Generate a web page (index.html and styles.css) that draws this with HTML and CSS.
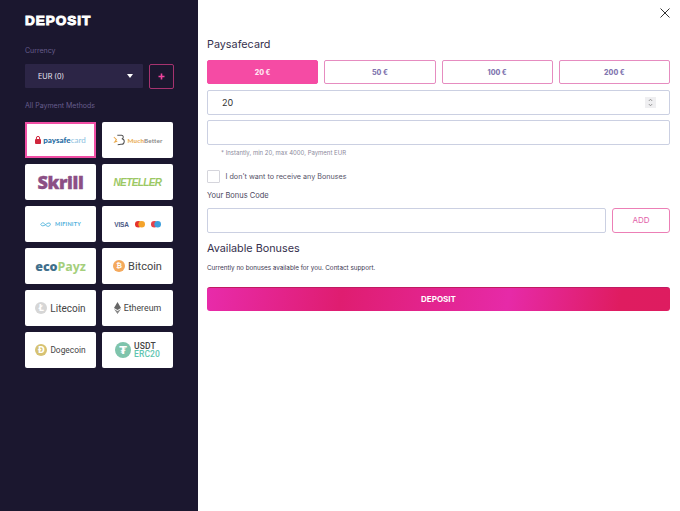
FILE: index.html
```html
<!DOCTYPE html>
<html lang="en">
<head>
<meta charset="utf-8">
<title>Deposit</title>
<link rel="stylesheet" href="styles.css">
</head>
<body>
<div class="modal">
  <aside class="side">
    <h1 class="side-title">DEPOSIT</h1>
    <div class="side-label cur-label">Currency</div>
    <div class="cur-row">
      <div class="cur-select"><span>EUR (0)</span><i class="caret"></i></div>
      <div class="cur-add"><svg width="7" height="7" viewBox="0 0 7 7"><path d="M3.5 0.5v6M0.5 3.5h6" stroke="#f0459f" stroke-width="1.6"/></svg></div>
    </div>
    <div class="side-label pay-label">All Payment Methods</div>
    <div class="methods">
      <div class="card active">
        <svg class="ic" width="6" height="8" viewBox="0 0 6 8"><path d="M1.4 3V2a1.6 1.6 0 0 1 3.2 0v1" fill="none" stroke="#d0263c"/><rect y="3" width="6" height="5" rx="1" fill="#d0263c"/></svg>
        <span class="l-ps"><b>paysafe</b><span>card</span></span>
      </div>
      <div class="card">
        <svg width="12" height="12" viewBox="0 0 14 13"><path d="M1 3l3 3-2 3 3-1" fill="none" stroke="#eba94a" stroke-width="1.2"/><path d="M5 1h4.500a2 2 0 0 1 .8 4 2.500 2.500 0 0 1-1 6.500L5.500 12" fill="none" stroke="#555" stroke-width="1.200"/></svg>
        <span class="l-mb"><b>Much</b><span>Better</span></span>
      </div>
      <div class="card"><span class="l-skrill">Skrill</span></div>
      <div class="card"><span class="l-net">NETELLER</span></div>
      <div class="card">
        <svg width="12" height="5" viewBox="0 0 16 6"><path d="M1 3c1.500-3 3.500-3 6 0s4.500 3 6 1.500 1-3.500-1-3.500-3 1-5 2.500-5 2-6-.5z" fill="none" stroke="#4fb3dc" stroke-width="1.200"/></svg>
        <span class="l-mif">MIFINITY</span>
      </div>
      <div class="card cards-logos">
        <span class="l-visa">VISA</span>
        <svg width="10" height="7" viewBox="0 0 10 7"><circle cx="3.300" cy="3.300" r="3.300" fill="#e5322c"/><circle cx="6.700" cy="3.300" r="3.300" fill="#f4a32a"/></svg>
        <svg width="10" height="7" viewBox="0 0 10 7"><circle cx="3.300" cy="3.300" r="3.300" fill="#e5424a"/><circle cx="6.700" cy="3.300" r="3.300" fill="#3d9fdc"/></svg>
      </div>
      <div class="card"><span class="l-eco"><b>eco</b><span>Payz</span></span></div>
      <div class="card crypto">
        <span class="coin coin-btc">₿</span><span class="c-name c-lg">Bitcoin</span>
      </div>
      <div class="card crypto">
        <span class="coin coin-ltc">Ł</span><span class="c-name c-ltc">Litecoin</span>
      </div>
      <div class="card crypto">
        <svg width="7" height="12" viewBox="0 0 7 12"><path d="M3.500 0L0 6l3.500 2L7 6z" fill="#666"/><path d="M0 7l3.500 5L7 7 3.500 9z" fill="#888"/></svg>
        <span class="c-name c-md">Ethereum</span>
      </div>
      <div class="card crypto">
        <span class="coin coin-doge">Ð</span><span class="c-name c-sm">Dogecoin</span>
      </div>
      <div class="card crypto">
        <span class="coin coin-usdt">₮</span>
        <span class="usdt"><span>USDT</span><span class="erc">ERC20</span></span>
      </div>
    </div>
  </aside>
  <main class="main">
    <svg class="close" width="10" height="10" viewBox="0 0 10 10"><path d="M.5.5l9 9M9.500.5l-9 9" stroke="#333" stroke-width="1" fill="none"/></svg>
    <h2 class="pay-title">Paysafecard</h2>
    <div class="amounts">
      <button class="amt sel">20 €</button>
      <button class="amt">50 €</button>
      <button class="amt">100 €</button>
      <button class="amt">200 €</button>
    </div>
    <div class="field num-field"><span>20</span>
      <span class="spin"><svg width="5" height="9" viewBox="0 0 5 9"><path d="M.8 3L2.500 1.200 4.200 3M.8 6l1.700 1.800L4.200 6" fill="none" stroke="#777" stroke-width=".7"/></svg></span>
    </div>
    <div class="field second"></div>
    <div class="hint">* Instantly, min 20, max 4000, Payment EUR</div>
    <label class="check-row"><span class="box"></span><span>I don't want to receive any Bonuses</span></label>
    <div class="bonus-label">Your Bonus Code</div>
    <div class="bonus-row">
      <div class="field bonus-input"></div>
      <button class="add">ADD</button>
    </div>
    <h2 class="avail">Available Bonuses</h2>
    <p class="none">Currently no bonuses available for you. Contact support.</p>
    <button class="deposit">DEPOSIT</button>
  </main>
</div>
</body>
</html>
```
FILE: styles.css
```css
* { box-sizing: border-box; }
html, body { margin: 0; padding: 0; }
body { width: 680px; height: 511px; overflow: hidden; font-family: "Inter", "Liberation Sans", sans-serif; background: #fff; }
.modal { display: flex; height: 511px; }

.side { width: 198px; flex: none; background: #1b172f; padding: 13px 0 0 25px; }
.side-title { margin: 0; font-family: "Liberation Sans", sans-serif; font-weight: 700; font-size: 13.5px; line-height: 16px; color: #fff; letter-spacing: 1px; -webkit-text-stroke: 1px #fff; }
.side-label { font-size: 7px; line-height: 10px; color: #675d8d; }
.cur-label { margin-top: 17px; }
.cur-row { display: flex; gap: 6px; margin-top: 8px; }
.cur-select { width: 118px; height: 24px; background: #2c2546; border-radius: 1px; display: flex; align-items: center; justify-content: space-between; padding: 0 10px 0 13px; color: #e8e6f0; font-size: 7.200px; }
.caret { width: 0; height: 0; border-left: 3.5px solid transparent; border-right: 3.5px solid transparent; border-top: 4px solid #fff; }
.cur-add { width: 25px; height: 25px; border: 1px solid #a6336f; border-radius: 2px; display: flex; align-items: center; justify-content: center; }
.pay-label { margin-top: 12px; }
.methods { display: grid; grid-template-columns: 71px 71px; grid-auto-rows: 36px; gap: 6px; margin-top: 11px; }
.card { background: #fff; border-radius: 2px; display: flex; align-items: center; justify-content: center; gap: 3px; font-family: "Roboto", sans-serif; overflow: hidden; white-space: nowrap; }
.card.active { border: 2px solid #f04fa5; border-radius: 0; }

.l-ps { font-size: 8px; font-family: "Lato", sans-serif; color: #2a7fb5; margin-left: -1px; }
.l-ps b { font-weight: 900; color: #1f6da3; }
.l-ps span { color: #8cc0e0; font-weight: 400; }
.l-mb { font-family: "Lato", sans-serif; font-size: 6.300px; font-weight: 700; letter-spacing: .1px; }
.l-mb b { color: #eab05c; }
.l-mb span { color: #8a8a8a; }
.l-skrill { font-family: "Open Sans", sans-serif; font-weight: 800; font-size: 18px; letter-spacing: -.4px; color: #8c4f85; -webkit-text-stroke: .4px #8c4f85; }
.l-net { font-family: "Liberation Sans", sans-serif; font-style: italic; font-weight: 700; font-size: 10px; letter-spacing: -.6px; color: #9cc864; }
.l-mif { font-family: "Lato", sans-serif; font-size: 5.500px; font-weight: 700; letter-spacing: .2px; color: #52b1dc; }
.cards-logos { gap: 6px; }
.l-visa { font-family: "Liberation Sans", sans-serif; font-size: 6.500px; font-weight: 700; color: #4c5a86; letter-spacing: -.2px; }
.l-eco { font-family: "Open Sans", sans-serif; font-size: 12.500px; font-weight: 700; letter-spacing: -.1px; }
.l-eco b { color: #3f6f8c; }
.l-eco span { color: #a5cf7c; }

.crypto { gap: 3px; }
.coin { display: flex; align-items: center; justify-content: center; border-radius: 50%; color: #fff; font-family: "DejaVu Sans", sans-serif; font-weight: 700; flex: none; }
.coin-btc { width: 12px; height: 12px; background: #f4a95c; font-size: 7px; }
.coin-ltc { width: 12px; height: 12px; background: #d6d6d6; font-size: 8px; }
.coin-doge { width: 12px; height: 12px; background: #d6c273; font-size: 8px; }
.coin-usdt { width: 16px; height: 16px; background: #7fc4ac; font-size: 11px; }
.c-name { color: #444; font-weight: 400; }
.c-lg { font-size: 11px; }
.c-ltc { font-size: 10px; }
.c-md { font-size: 8.800px; }
.c-sm { font-size: 8.400px; }
.usdt { display: flex; flex-direction: column; font-size: 8.500px; line-height: 8.500px; font-weight: 500; color: #444; letter-spacing: .1px; }
.erc { color: #5fc5b0; }

.main { flex: 1; position: relative; padding: 38px 10px 0 9px; color: #35304d; }
.close { position: absolute; top: 8px; right: 10px; }
h2 { margin: 0; font-weight: 400; }
.pay-title { font-size: 10.800px; line-height: 13px; }
.amounts { display: grid; grid-template-columns: repeat(4, 1fr); gap: 6px; margin-top: 9px; }
button { font-family: inherit; cursor: pointer; }
.amt { height: 24px; background: #fff; border: 1px solid #e68cc0; border-radius: 2px; font-size: 7px; font-weight: 800; color: #8377b0; padding: 0; }
.amt.sel { background: #f54ba4; border-color: #f54ba4; color: #ffe3f1; }
.field { height: 25px; border: 1px solid #cbd0e2; border-radius: 2px; background: #fff; }
.num-field { display: flex; align-items: center; justify-content: space-between; margin-top: 6px; padding: 0 14px; font-size: 9px; color: #333; }
.spin { width: 11px; height: 11px; background: #efeff1; display: flex; align-items: center; justify-content: center; margin-right: -1px; }
.second { margin-top: 5px; }
.hint { margin: 3px 0 0 14px; font-size: 6px; line-height: 9px; color: #8c8a9c; }
.check-row { display: flex; align-items: center; gap: 6px; margin-top: 13px; font-size: 7.200px; color: #555268; }
.box { width: 12.500px; height: 12.500px; border: 1px solid #d5d5dc; background: #fff; border-radius: 1px; }
.bonus-label { margin-top: 8px; font-size: 7.500px; line-height: 10px; color: #4c4860; }
.bonus-row { display: flex; gap: 6px; margin-top: 7px; }
.bonus-input { flex: 1; }
.add { width: 58px; height: 25px; background: #fff; border: 1px solid #ec7fb6; border-radius: 3px; color: #e25ea8; font-size: 8px; padding: 0; }
.avail { margin-top: 9px; font-size: 10.800px; line-height: 13px; }
.none { margin: 9px 0 0; font-size: 6.300px; line-height: 9px; color: #3a3650; }
.deposit { display: block; width: 100%; height: 24px; margin-top: 14px; border: 0; border-radius: 3px; color: #fff; font-size: 8px; font-weight: 700; background: linear-gradient(100deg, #e82bab 0%, #df1d70 29%, #e62aa8 65%, #df1c60 89%, #de1c60 100%); border-top: 1px solid #c01a62; }
```
